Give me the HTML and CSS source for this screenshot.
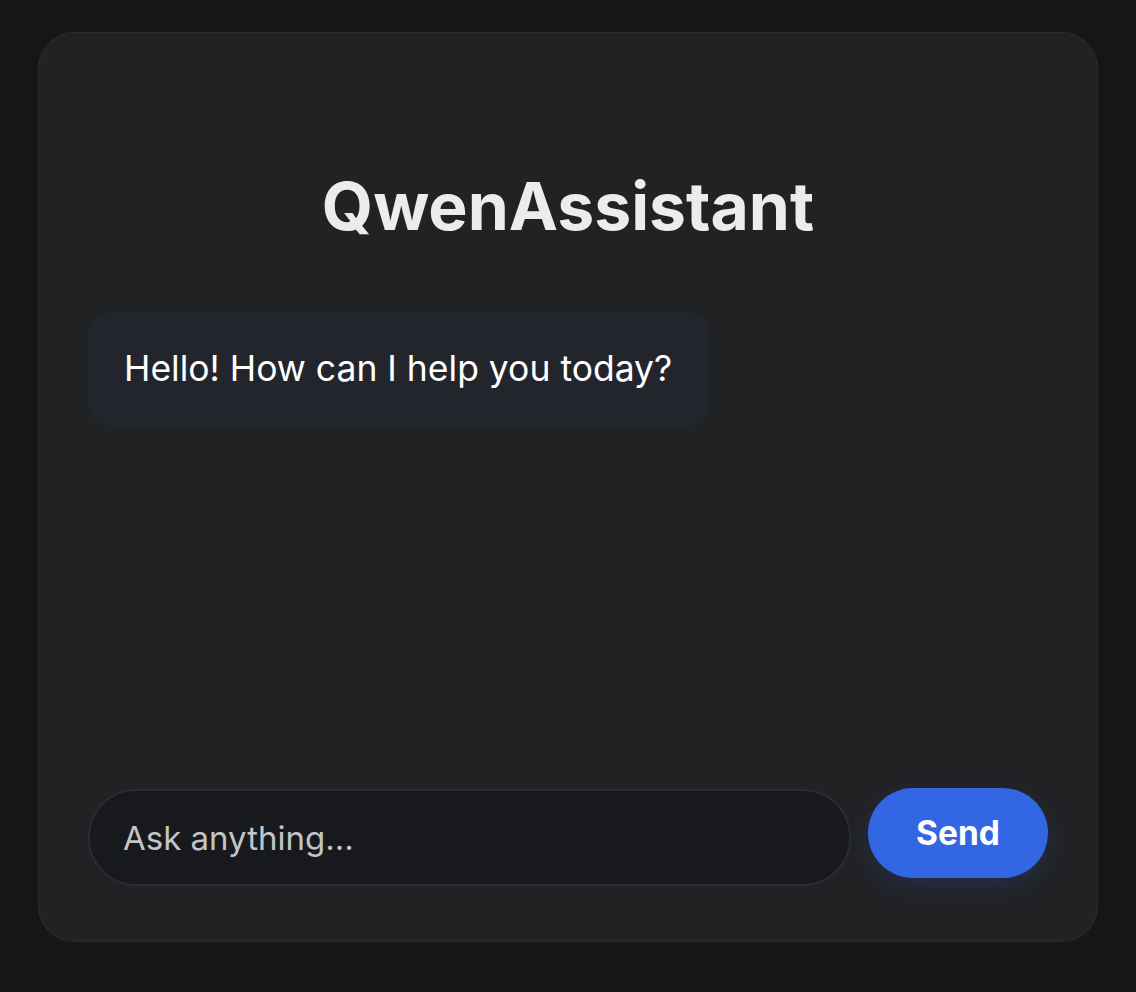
FILE: index.html
```html
<!DOCTYPE html>
<html lang="en">
<head>
<meta charset="utf-8">
<title>QwenAssistant</title>
<link rel="stylesheet" href="styles.css">
</head>
<body>
<main class="card">
  <h1 class="title">QwenAssistant</h1>
  <section class="messages">
    <div class="bubble">Hello! How can I help you today?</div>
  </section>
  <form class="composer">
    <input class="input" type="text" placeholder="Ask anything...">
    <button class="send" type="button">Send</button>
  </form>
</main>
</body>
</html>
```

FILE: styles.css
```css
* { box-sizing: border-box; }
html, body { margin: 0; height: 100%; }
body {
  background: #161616;
  font-family: Inter, "Liberation Sans", sans-serif;
  padding: 32px 38px 50px;
}
.card {
  width: 1060px;
  height: 910px;
  background: #212224;
  border: 1px solid #2b2d33;
  border-radius: 36px;
  padding: 0 49px 55px;
  display: flex;
  flex-direction: column;
}
.title {
  margin: 136px 0 0;
  text-align: center;
  font-size: 66px;
  line-height: 74px;
  font-weight: 700;
  letter-spacing: 0;
  color: #ececec;
}
.messages {
  flex: 1;
  padding-top: 69px;
}
.bubble {
  display: inline-block;
  background: #23252d;
  color: #ffffff;
  font-size: 35.5px;
  line-height: 42px;
  padding: 36px 38px 36px 36px;
  border-radius: 22px;
}
.composer {
  display: flex;
  align-items: flex-start;
  gap: 17px;
  margin: 0;
}
.input {
  flex: 1;
  height: 97px;
  background: #18191d;
  border: 2px solid #2a2c33;
  border-radius: 48px;
  padding: 0 33px;
  font-family: Inter, "Liberation Sans", sans-serif;
  font-size: 33px;
  color: #e0e0e0;
  outline: none;
}
.input::placeholder { color: #c4c4c8; }
.send {
  width: 180px;
  height: 90px;
  margin-top: -1px;
  background: #3366e3;
  border: none;
  border-radius: 45px;
  color: #ffffff;
  font-family: Inter, "Liberation Sans", sans-serif;
  font-weight: 700;
  font-size: 33.5px;
  box-shadow: 0 8px 24px rgba(51, 102, 227, 0.18);
}
```
